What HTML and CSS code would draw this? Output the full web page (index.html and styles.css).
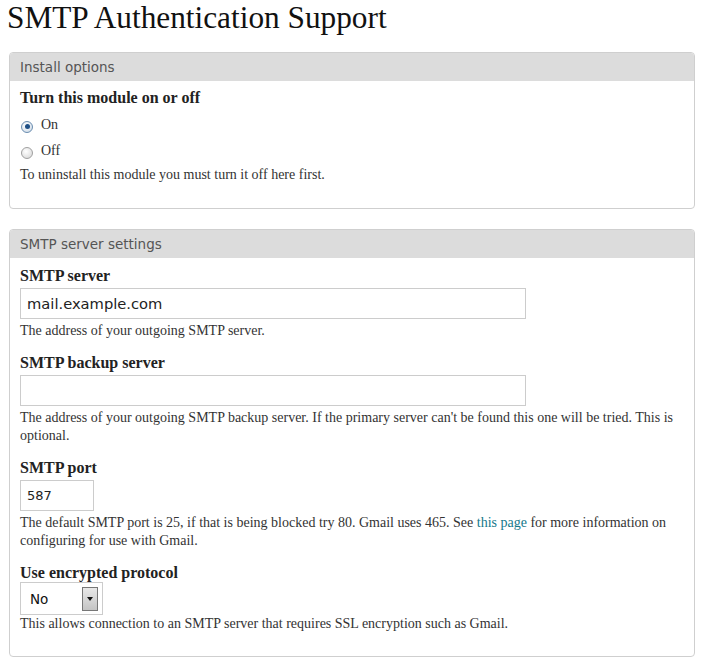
FILE: index.html
```html
<!DOCTYPE html>
<html lang="en">
<head>
  <meta charset="UTF-8" />
  <title>SMTP Authentication Support</title>
  <link rel="stylesheet" href="styles.css">
</head>
<body>
  <h1>SMTP Authentication Support</h1>

  <div class="panel install">
    <div class="panel-head">Install options</div>
    <div class="panel-body">
      <div class="field">
        <div class="label">Turn this module on or off</div>
        <div class="radios">
          <div class="radio-row"><span class="radio checked"></span>On</div>
          <div class="radio-row"><span class="radio"></span>Off</div>
        </div>
        <div class="desc">To uninstall this module you must turn it off here first.</div>
      </div>
    </div>
  </div>

  <div class="panel">
    <div class="panel-head">SMTP server settings</div>
    <div class="panel-body">
      <div class="field">
        <div class="label">SMTP server</div>
        <input class="text-input wide" type="text" value="mail.example.com" />
        <div class="desc">The address of your outgoing SMTP server.</div>
      </div>
      <div class="field">
        <div class="label">SMTP backup server</div>
        <input class="text-input wide" type="text" value="" />
        <div class="desc">The address of your outgoing SMTP backup server. If the primary server can't be found this one will be tried. This is optional.</div>
      </div>
      <div class="field">
        <div class="label">SMTP port</div>
        <input class="text-input port" type="text" value="587" />
        <div class="desc">The default SMTP port is 25, if that is being blocked try 80. Gmail uses 465. See <a href="#">this page</a> for more information on configuring for use with Gmail.</div>
      </div>
      <div class="field">
        <div class="label">Use encrypted protocol</div>
        <div class="select">
          <span class="select-value">No</span>
          <span class="select-arrow"></span>
        </div>
        <div class="desc">This allows connection to an SMTP server that requires SSL encryption such as Gmail.</div>
      </div>
    </div>
  </div>
</body>
</html>
```

FILE: styles.css
```css
body {
  margin: 0;
  padding: 0 9px 0 9px;
  font-family: 'Liberation Serif', serif;
  font-size: 14px;
  color: #333;
  background: #fff;
}

h1 {
  margin: 0 0 0 -2px;
  padding-top: 0;
  font-family: 'Liberation Serif', serif;
  font-weight: normal;
  font-size: 31.3px;
  line-height: 35px;
  color: #111;
}

.panel {
  margin-top: 17px;
  border: 1px solid #cfcfcf;
  border-radius: 4px;
  overflow: hidden;
}

.panel + .panel {
  margin-top: 20px;
}

.panel-head {
  background: #dcdcdc;
  height: 28px;
  line-height: 28px;
  padding: 0 10px;
  font-family: 'DejaVu Sans', sans-serif;
  font-size: 13.5px;
  color: #555;
}

.panel-body {
  padding: 8px 10px 23px 10px;
}

.install .panel-body {
  padding: 7px 10px 24px 10px;
}

.field {
  margin-bottom: 14px;
}

.field:last-child {
  margin-bottom: 0;
}

.label {
  font-weight: bold;
  font-size: 16px;
  line-height: 20px;
  color: #222;
}

.radios {
  margin-top: 4px;
}

.radio-row {
  display: flex;
  align-items: center;
  height: 26px;
}

.radio {
  width: 12px;
  height: 12px;
  border-radius: 50%;
  border: 1px solid #a0a0a0;
  background: radial-gradient(circle at 40% 35%, #fff, #d4d4d4);
  margin: 3px 8px 0 1px;
  box-sizing: border-box;
  position: relative;
}

.radio.checked {
  border-color: #6a8db0;
  background: radial-gradient(circle at 40% 35%, #fff, #c8d6e4);
}

.radio.checked::after {
  content: '';
  position: absolute;
  left: 2.5px;
  top: 2.5px;
  width: 5px;
  height: 5px;
  border-radius: 50%;
  background: #1e4f86;
}

.desc {
  line-height: 17.5px;
  margin-top: 3px;
}

.radios + .desc {
  margin-top: 2px;
}

.select + .desc {
  margin-top: 0;
}

.desc a {
  color: #13788a;
  text-decoration: none;
}

.text-input {
  display: block;
  box-sizing: border-box;
  height: 31px;
  margin: 2px 0 0 0;
  padding: 0 6px;
  border: 1px solid #ccc;
  font-family: 'DejaVu Sans', sans-serif;
  color: #222;
  outline: none;
}

.text-input.wide {
  width: 506px;
  font-size: 14.7px;
}

.text-input.port {
  width: 74px;
  font-size: 13px;
}

.select {
  display: flex;
  align-items: center;
  justify-content: space-between;
  box-sizing: border-box;
  width: 83px;
  height: 33px;
  margin: -1px 0 0 0;
  padding: 0 4px 0 9px;
  border: 1px solid #ccc;
  font-family: 'DejaVu Sans', sans-serif;
  font-size: 13.5px;
  color: #111;
}

.select-arrow {
  width: 16px;
  height: 24px;
  box-sizing: border-box;
  border: 1px solid #777;
  background: linear-gradient(#e8e8e8, #c4c4c4);
  position: relative;
}

.select-arrow::after {
  content: '';
  position: absolute;
  left: 4px;
  top: 9px;
  border-left: 3px solid transparent;
  border-right: 3px solid transparent;
  border-top: 4px solid #111;
}
```
